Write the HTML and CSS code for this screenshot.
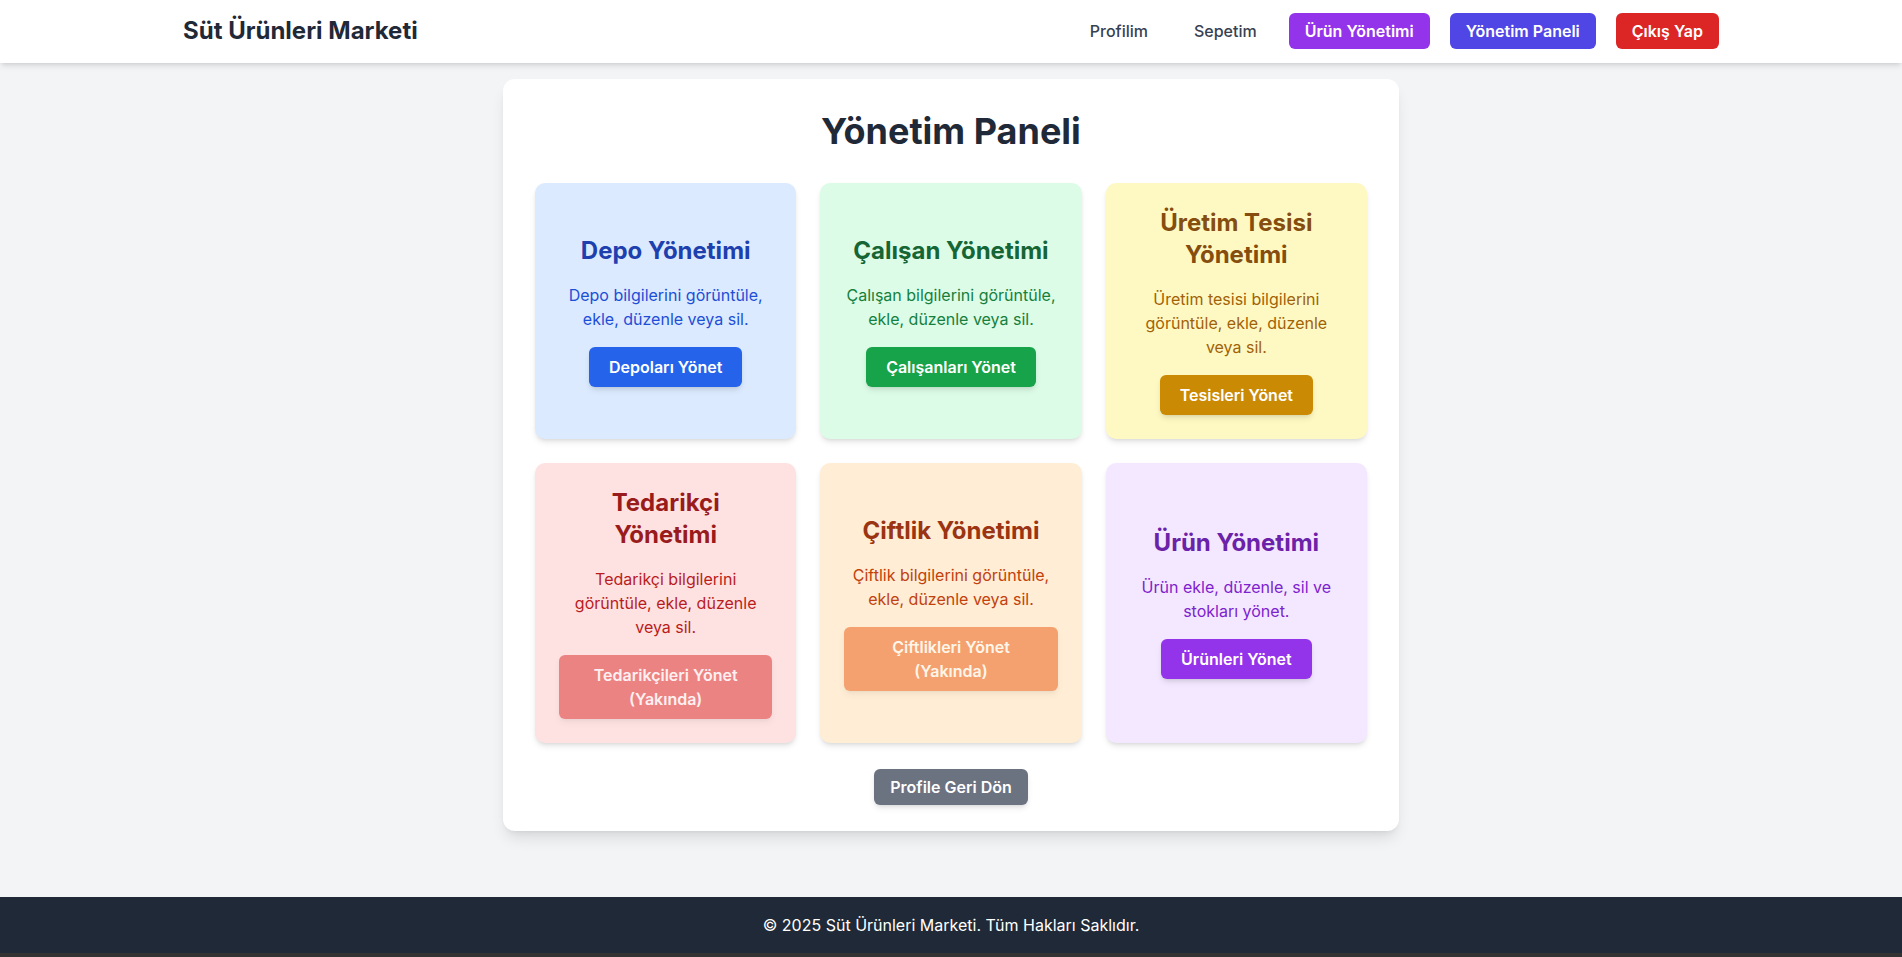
FILE: index.html
```html
<!DOCTYPE html>
<html lang="tr">
<head>
<meta charset="utf-8">
<title>Yönetim Paneli - Süt Ürünleri Marketi</title>
<link rel="stylesheet" href="styles.css">
</head>
<body>
<header class="site-header">
  <div class="container header-inner">
    <a class="brand" href="#">Süt Ürünleri Marketi</a>
    <nav class="nav">
      <a class="nav-link" href="#">Profilim</a>
      <a class="nav-link" href="#">Sepetim</a>
      <a class="nav-btn btn-purple" href="#">Ürün Yönetimi</a>
      <a class="nav-btn btn-indigo" href="#">Yönetim Paneli</a>
      <a class="nav-btn btn-red" href="#">Çıkış Yap</a>
    </nav>
  </div>
</header>

<main class="main">
  <section class="panel">
    <h1 class="panel-title">Yönetim Paneli</h1>
    <div class="grid">
      <div class="tile tile-blue">
        <h2 class="tile-title">Depo Yönetimi</h2>
        <p class="tile-desc">Depo bilgilerini görüntüle, ekle, düzenle veya sil.</p>
        <a class="tile-btn" href="#">Depoları Yönet</a>
      </div>
      <div class="tile tile-green">
        <h2 class="tile-title">Çalışan Yönetimi</h2>
        <p class="tile-desc">Çalışan bilgilerini görüntüle, ekle, düzenle veya sil.</p>
        <a class="tile-btn" href="#">Çalışanları Yönet</a>
      </div>
      <div class="tile tile-yellow">
        <h2 class="tile-title">Üretim Tesisi Yönetimi</h2>
        <p class="tile-desc">Üretim tesisi bilgilerini görüntüle, ekle, düzenle veya sil.</p>
        <a class="tile-btn" href="#">Tesisleri Yönet</a>
      </div>
      <div class="tile tile-red">
        <h2 class="tile-title">Tedarikçi Yönetimi</h2>
        <p class="tile-desc">Tedarikçi bilgilerini görüntüle, ekle, düzenle veya sil.</p>
        <span class="tile-btn is-disabled">Tedarikçileri Yönet (Yakında)</span>
      </div>
      <div class="tile tile-orange">
        <h2 class="tile-title">Çiftlik Yönetimi</h2>
        <p class="tile-desc">Çiftlik bilgilerini görüntüle, ekle, düzenle veya sil.</p>
        <span class="tile-btn is-disabled">Çiftlikleri Yönet (Yakında)</span>
      </div>
      <div class="tile tile-purple">
        <h2 class="tile-title">Ürün Yönetimi</h2>
        <p class="tile-desc">Ürün ekle, düzenle, sil ve stokları yönet.</p>
        <a class="tile-btn" href="#">Ürünleri Yönet</a>
      </div>
    </div>
    <div class="back-row">
      <a class="back-btn" href="#">Profile Geri Dön</a>
    </div>
  </section>
</main>

<footer class="site-footer">
  <p class="footer-text">© 2025 Süt Ürünleri Marketi. Tüm Hakları Saklıdır.</p>
</footer>
</body>
</html>
```

FILE: styles.css
```css
* { box-sizing: border-box; }

html, body { margin: 0; padding: 0; }

body {
  font-family: Inter, "Noto Sans", "Liberation Sans", sans-serif;
  font-size: 16px;
  line-height: 24px;
  background: #f3f4f6;
  color: #1f2937;
  min-height: 100vh;
  display: flex;
  flex-direction: column;
}

a { text-decoration: none; }

.container {
  width: 1536px;
  margin: 0 auto;
}

/* Header */
.site-header {
  background: #ffffff;
  box-shadow: 0 4px 6px -1px rgba(0,0,0,0.1), 0 2px 4px -2px rgba(0,0,0,0.1);
  position: relative;
  z-index: 2;
}

.header-inner {
  display: flex;
  align-items: center;
  justify-content: space-between;
  padding: 13px 0 14px;
}

.brand {
  font-size: 24px;
  line-height: 32px;
  font-weight: 700;
  color: #1f2937;
}

.nav {
  display: flex;
  align-items: center;
  gap: 20px;
}

.nav-link {
  padding: 6px 14px;
  margin-right: -2px;
  color: #374151;
  font-weight: 500;
  font-size: 16px;
  line-height: 24px;
}

.nav-btn {
  display: inline-block;
  padding: 6px 16px;
  border-radius: 6px;
  color: #ffffff;
  font-weight: 600;
  font-size: 16px;
  line-height: 24px;
}

.btn-purple { background: #9333ea; }
.btn-indigo { background: #4f46e5; }
.btn-red { background: #dc2626; }

/* Main */
.main {
  flex: 1 0 auto;
  padding-top: 16px;
}

.panel {
  width: 896px;
  margin: 0 auto;
  background: #ffffff;
  border-radius: 12px;
  box-shadow: 0 10px 15px -3px rgba(0,0,0,0.1), 0 4px 6px -4px rgba(0,0,0,0.1);
  padding: 32px 32px 26px;
}

.panel-title {
  margin: 0 0 32px;
  text-align: center;
  font-size: 36px;
  line-height: 40px;
  font-weight: 700;
  color: #1f2937;
}

.grid {
  display: grid;
  grid-template-columns: repeat(3, 1fr);
  gap: 24px;
}

.tile {
  padding: 24px;
  border-radius: 10px;
  box-shadow: 0 4px 6px -1px rgba(0,0,0,0.1), 0 2px 4px -2px rgba(0,0,0,0.1);
  display: flex;
  flex-direction: column;
  align-items: center;
  justify-content: center;
  text-align: center;
}

.tile-title {
  margin: 0 0 16px;
  font-size: 24px;
  line-height: 32px;
  font-weight: 700;
}

.tile-desc {
  margin: 0 0 16px;
  font-size: 16px;
  line-height: 24px;
}

.tile-btn {
  display: inline-block;
  padding: 8px 20px;
  border-radius: 6px;
  color: #ffffff;
  font-weight: 600;
  font-size: 16px;
  line-height: 24px;
  box-shadow: 0 4px 6px -1px rgba(0,0,0,0.1), 0 2px 4px -2px rgba(0,0,0,0.1);
}

.tile-btn.is-disabled {
  opacity: 0.5;
  cursor: not-allowed;
}

.tile-blue { background: #dbeafe; }
.tile-blue .tile-title { color: #1e40af; }
.tile-blue .tile-desc { color: #1d4ed8; }
.tile-blue .tile-btn { background: #2563eb; }

.tile-green { background: #dcfce7; }
.tile-green .tile-title { color: #166534; }
.tile-green .tile-desc { color: #15803d; }
.tile-green .tile-btn { background: #16a34a; }

.tile-yellow { background: #fef9c3; }
.tile-yellow .tile-title { color: #854d0e; }
.tile-yellow .tile-desc { color: #a16207; }
.tile-yellow .tile-btn { background: #ca8a04; }

.tile-red { background: #fee2e2; }
.tile-red .tile-title { color: #991b1b; }
.tile-red .tile-desc { color: #b91c1c; }
.tile-red .tile-btn { background: #dc2626; }

.tile-orange { background: #ffedd5; }
.tile-orange .tile-title { color: #9a3412; }
.tile-orange .tile-desc { color: #c2410c; }
.tile-orange .tile-btn { background: #ea580c; }

.tile-purple { background: #f3e8ff; }
.tile-purple .tile-title { color: #6b21a8; }
.tile-purple .tile-desc { color: #7e22ce; }
.tile-purple .tile-btn { background: #9333ea; }

.back-row {
  margin-top: 26px;
  display: flex;
  justify-content: center;
}

.back-btn {
  display: inline-block;
  padding: 6px 16px;
  border-radius: 6px;
  background: #6b7280;
  color: #ffffff;
  font-weight: 600;
  font-size: 16px;
  line-height: 24px;
  box-shadow: 0 4px 6px -1px rgba(0,0,0,0.1), 0 2px 4px -2px rgba(0,0,0,0.1);
}

/* Footer */
.site-footer {
  background: #1f2937;
  border-bottom: 4px solid #333333;
  padding: 16px 0;
  text-align: center;
}

.footer-text {
  margin: 0;
  color: #ffffff;
  font-size: 16px;
  line-height: 24px;
}
```
